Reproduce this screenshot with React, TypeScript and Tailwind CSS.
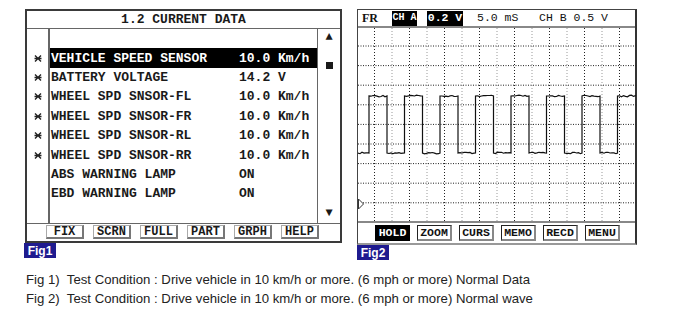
import React from "react";

const rows = [
  { name: "", value: "", mark: false },
  { name: "VEHICLE SPEED SENSOR", value: "10.0 Km/h", mark: true, sel: true },
  { name: "BATTERY VOLTAGE", value: "14.2 V", mark: true },
  { name: "WHEEL SPD SNSOR-FL", value: "10.0 Km/h", mark: true },
  { name: "WHEEL SPD SNSOR-FR", value: "10.0 Km/h", mark: true },
  { name: "WHEEL SPD SNSOR-RL", value: "10.0 Km/h", mark: true },
  { name: "WHEEL SPD SNSOR-RR", value: "10.0 Km/h", mark: true },
  { name: "ABS WARNING LAMP", value: "ON", mark: false },
  { name: "EBD WARNING LAMP", value: "ON", mark: false },
  { name: "", value: "", mark: false },
];

const fig1Buttons = ["FIX", "SCRN", "FULL", "PART", "GRPH", "HELP"];
const fig2Buttons = ["HOLD", "ZOOM", "CURS", "MEMO", "RECD", "MENU"];

function Mark() {
  return (
    <svg width="8" height="7" viewBox="0 0 8 7">
      <path d="M1 0.5 L7 6.5 M7 0.5 L1 6.5 M0.5 3.5 L7.5 3.5" stroke="#222" strokeWidth="1.4" fill="none" />
    </svg>
  );
}

// little wobble on the flat parts of the trace
function jitter(i: number) {
  const v = Math.sin(i * 12.9898) * 43758.5453;
  return (v - Math.floor(v) - 0.5) * 1.6;
}

function wavePath() {
  const hi = 68;
  const lo = 125;
  const rises = [11, 46.5, 82, 117.5, 153, 188.5, 224, 259.5];
  const w = 18;
  let d = `M0 ${lo}`;
  let x = 0;
  let n = 0;
  const flat = (to: number, y: number) => {
    while (x + 2 < to) {
      x += 2;
      n++;
      d += ` L${x} ${(y + jitter(n)).toFixed(1)}`;
    }
    x = to;
    d += ` L${x} ${y}`;
  };
  rises.forEach((r, i) => {
    flat(r, lo);
    d += ` L${r} ${hi}`;
    const f = i === rises.length - 1 ? 278 : r + w;
    flat(f, hi);
    if (i !== rises.length - 1) d += ` L${f} ${lo}`;
  });
  return d;
}

function Scope() {
  const vs = Array.from({ length: 15 }, (_, k) => 16.5 + 17.5 * k);
  const hs = Array.from({ length: 9 }, (_, k) => 18 + 19.6 * k);
  return (
    <svg width="278" height="193" className="block">
      {vs.map((x, k) => (
        <line key={"v" + k} x1={x} y1="0" x2={x} y2="193" stroke={k % 2 === 0 ? "#222" : "#999"} strokeWidth="1" strokeDasharray="1 2" />
      ))}
      {hs.map((y, k) => (
        <line key={"h" + k} x1="0" y1={y} x2="278" y2={y} stroke="#222" strokeWidth="1" strokeDasharray="1 1.5" />
      ))}
      <path d={wavePath()} stroke="#111" strokeWidth="1.2" fill="none" />
      <path d="M0.5 171 L5.5 176 L0.5 181 Z" stroke="#333" strokeWidth="1" fill="white" />
    </svg>
  );
}

export default function App() {
  return (
    <div className="w-[700px] h-[324px] bg-white overflow-hidden">
      <div className="flex pl-[25px] pt-[9px]">
        {/* Fig 1 */}
        <div className="flex flex-col">
          <div className="w-[317px] h-[234px] border-2 border-[#3a3a3a] flex flex-col font-['Liberation_Mono',monospace] font-bold text-[#1a1a1a]">
            <div className="h-[18px] border-b border-[#666] flex items-center justify-center text-[13px] leading-none">1.2 CURRENT DATA</div>
            <div className="flex border-b border-[#666]">
              <div className="w-[21px] flex flex-col">
                {rows.map((r, i) => (
                  <div key={i} className="h-[19.4px] flex items-center justify-center pl-[1px]">
                    {r.mark && <Mark />}
                  </div>
                ))}
              </div>
              <div className="w-[270px] border-l-2 border-r border-[#666] flex flex-col">
                {rows.map((r, i) => (
                  <div
                    key={i}
                    className={`h-[19.4px] flex items-center text-[13px] leading-none whitespace-pre ${r.sel ? "bg-black text-white" : ""}`}
                  >
                    <span className="w-[189px] pl-[1px]">{r.name}</span>
                    <span>{r.value}</span>
                  </div>
                ))}
              </div>
              <div className="flex-1 flex flex-col items-center text-[12px] leading-none">
                <div className="mt-[2px]">▲</div>
                <div className="mt-[19px] w-[7px] h-[7px] bg-[#1a1a1a]" />
                <div className="mt-auto mb-[4px]">▼</div>
              </div>
            </div>
            <div className="flex-1 flex items-center pl-[19px] gap-[9px]">
              {fig1Buttons.map((b) => (
                <div key={b} className="w-[38px] h-[14px] border border-[#aaa] border-r-2 border-b-2 border-r-[#777] border-b-[#777] flex items-center justify-center text-[12px] leading-none">
                  {b}
                </div>
              ))}
            </div>
          </div>
          <div className="w-[32px] h-[15px] -ml-[1px] bg-[#1f1b8f] text-white text-[12px] font-bold leading-none flex items-center justify-center font-['Liberation_Sans',Arial,sans-serif]">
            Fig1
          </div>
        </div>

        {/* Fig 2 */}
        <div className="flex flex-col ml-[15px]">
          <div className="w-[280px] h-[236px] border-l border-t border-[#444] border-r-2 border-r-[#333] border-b-2 border-b-[#999] flex flex-col font-['Liberation_Mono',monospace] text-[#111]">
            <div className="h-[18px] border-b-2 border-[#888] flex items-center pl-[4px] text-[11.5px] leading-none whitespace-pre">
              <span className="w-[16px] font-bold font-['Liberation_Serif',serif] text-[12px]">FR</span>
              <span className="ml-[14px] w-[25px] h-[15px] bg-black text-white font-bold text-[10px] flex items-center justify-center">CH A</span>
              <span className="ml-[10px] w-[36px] h-[15px] bg-black text-white font-bold flex items-center justify-center">0.2 V</span>
              <span className="ml-[14px] w-[40px]">5.0 mS</span>
              <span className="ml-[22px]">CH B 0.5 V</span>
            </div>
            <div className="h-[193px]">
              <Scope />
            </div>
            <div className="border-t-2 border-[#888] flex-1 flex items-center pl-[17px] gap-[7px]">
              {fig2Buttons.map((b) => (
                <div
                  key={b}
                  className={`w-[35px] h-[16px] flex items-center justify-center text-[11.5px] font-bold leading-none ${
                    b === "HOLD" ? "bg-black text-white" : "border border-[#222] border-r-2 border-b-2 border-r-[#888] border-b-[#888]"
                  }`}
                >
                  {b}
                </div>
              ))}
            </div>
          </div>
          <div className="w-[32px] h-[15px] bg-[#1f1b8f] text-white text-[12px] font-bold leading-none flex items-center justify-center font-['Liberation_Sans',Arial,sans-serif]">
            Fig2
          </div>
        </div>
      </div>

      <div className="mt-[10px] ml-[26px] text-[13.2px] leading-[19px] text-[#222] font-['Liberation_Sans',Arial,sans-serif] whitespace-pre">
        <div>Fig 1)  Test Condition : Drive vehicle in 10 km/h or more. (6 mph or more) Normal Data</div>
        <div>Fig 2)  Test Condition : Drive vehicle in 10 km/h or more. (6 mph or more) Normal wave</div>
      </div>
    </div>
  );
}
